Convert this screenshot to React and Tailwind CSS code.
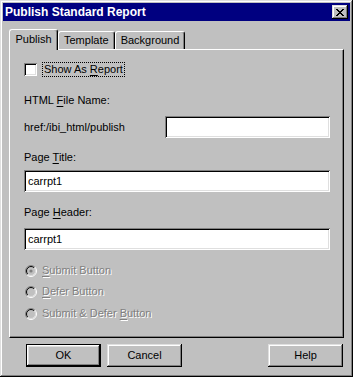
import React from "react";

const raised =
  "shadow-[inset_-1px_-1px_#000,inset_1px_1px_#dfdfdf,inset_-2px_-2px_#808080,inset_2px_2px_#fff]";
const sunken =
  "shadow-[inset_1px_1px_#808080,inset_-1px_-1px_#fff,inset_2px_2px_#000,inset_-2px_-2px_#dfdfdf]";

function U({ children }) {
  return <span className="underline underline-offset-2">{children}</span>;
}

function Tab({ label, active }) {
  return (
    <div
      className={
        "relative flex items-center justify-center rounded-t-[3px] border-t border-l border-r border-t-white border-l-white border-r-black bg-[#c0c0c0] shadow-[inset_-1px_0_#808080] " +
        (active ? "z-10 -mb-px h-[21px] w-[49px] pb-[2px]" : "h-[18px]")
      }
    >
      <span className={active ? "" : "px-[5px]"}>{label}</span>
    </div>
  );
}

// half-circle arcs: top-left part and bottom-right part
function arcs(r) {
  const d = r / Math.SQRT2;
  const c = 6;
  const tl = `M${c - d} ${c + d} A${r} ${r} 0 0 1 ${c + d} ${c - d}`;
  const br = `M${c + d} ${c - d} A${r} ${r} 0 0 1 ${c - d} ${c + d}`;
  return [tl, br];
}

function Radio({ checked, children }) {
  const [o1, o2] = arcs(5.5);
  const [i1, i2] = arcs(4.5);
  return (
    <div className="flex h-[13px] items-center">
      <svg width="12" height="12" viewBox="0 0 12 12" className="ml-px shrink-0">
        <circle cx="6" cy="6" r="5" fill="#c0c0c0" />
        <path d={o1} stroke="#808080" strokeWidth="1" fill="none" />
        <path d={o2} stroke="#fff" strokeWidth="1" fill="none" />
        <path d={i1} stroke="#000" strokeWidth="1" fill="none" />
        <path d={i2} stroke="#dfdfdf" strokeWidth="1" fill="none" />
        {checked && <circle cx="6" cy="6" r="1.6" fill="#808080" />}
      </svg>
      <span className="ml-[5px] text-[#808080] [text-shadow:1px_1px_0_#fff]">{children}</span>
    </div>
  );
}

function Btn({ children, isDefault }) {
  return (
    <div
      className={
        "flex h-[23px] w-[75px] items-center justify-center bg-[#c0c0c0] " +
        (isDefault
          ? "border border-black shadow-[inset_-1px_-1px_#000,inset_1px_1px_#fff,inset_-2px_-2px_#808080,inset_2px_2px_#dfdfdf]"
          : raised)
      }
    >
      {children}
    </div>
  );
}

export default function App() {
  return (
    <div
      className={
        "flex h-[377px] w-[353px] flex-col bg-[#c0c0c0] p-[3px] text-[11px] leading-[13px] text-black " +
        raised
      }
      style={{ fontFamily: '"Liberation Sans", Arial, sans-serif' }}
    >
      {/* title bar */}
      <div className="flex h-[18px] items-center justify-between bg-[#000080] pl-[2px] pr-[2px]">
        <span className="text-[12px] font-bold text-white">Publish Standard Report</span>
        <div className={"flex h-[14px] w-[16px] items-center justify-center bg-[#c0c0c0] " + raised}>
          <svg width="8" height="7" viewBox="0 0 8 7">
            <path d="M0 0h2v1h1v1h2v-1h1v-1h2v1h-1v1h-1v1h-1v1h1v1h1v1h1v1h-2v-1h-1v-1h-2v1h-1v1h-2v-1h1v-1h1v-1h1v-1h-1v-1h-1v-1h-1z" fill="#000" />
          </svg>
        </div>
      </div>

      {/* tabs */}
      <div className="mt-[8px] flex h-[20px] items-end pl-[6px]">
        <Tab label="Publish" active />
        <Tab label="Template" />
        <Tab label="Background" />
      </div>

      {/* panel */}
      <div className="mx-[6px] flex h-[289px] flex-col border-t border-l border-r border-b border-t-white border-l-white border-r-black border-b-black pl-[14px] pr-[13px] pt-[12px] shadow-[inset_-1px_-1px_#808080]">
        <div className="flex h-[15px] items-center">
          <div className={"h-[13px] w-[13px] bg-white " + sunken} />
          <span className="ml-[5px] border border-dotted border-black px-[1px] leading-[13px]">
            Show As <U>R</U>eport
          </span>
        </div>

        <div className="mt-[17px]">
          HTML <U>F</U>ile Name:
        </div>

        <div className="mt-[9px] flex h-[22px] items-center justify-between">
          <span>href:/ibi_html/publish</span>
          <div className={"h-[22px] w-[165px] bg-white " + sunken} />
        </div>

        <div className="mt-[13px]">
          Page <U>T</U>itle:
        </div>
        <div className={"mt-[6px] flex h-[22px] items-center bg-white pl-[4px] " + sunken}>carrpt1</div>

        <div className="mt-[14px]">
          Page <U>H</U>eader:
        </div>
        <div className={"mt-[9px] flex h-[22px] items-center bg-white pl-[4px] " + sunken}>carrpt1</div>

        <div className="mt-[14px]">
          <Radio checked>
            <U>S</U>ubmit Button
          </Radio>
        </div>
        <div className="mt-[8px]">
          <Radio>
            <U>D</U>efer Button
          </Radio>
        </div>
        <div className="mt-[9px]">
          <Radio>
            Submit &amp; Defer <U>B</U>utton
          </Radio>
        </div>
      </div>

      {/* buttons */}
      <div className="mt-[6px] flex pl-[23px] pr-[7px]">
        <Btn isDefault>OK</Btn>
        <div className="ml-[6px]">
          <Btn>Cancel</Btn>
        </div>
        <div className="ml-auto">
          <Btn>Help</Btn>
        </div>
      </div>
    </div>
  );
}
